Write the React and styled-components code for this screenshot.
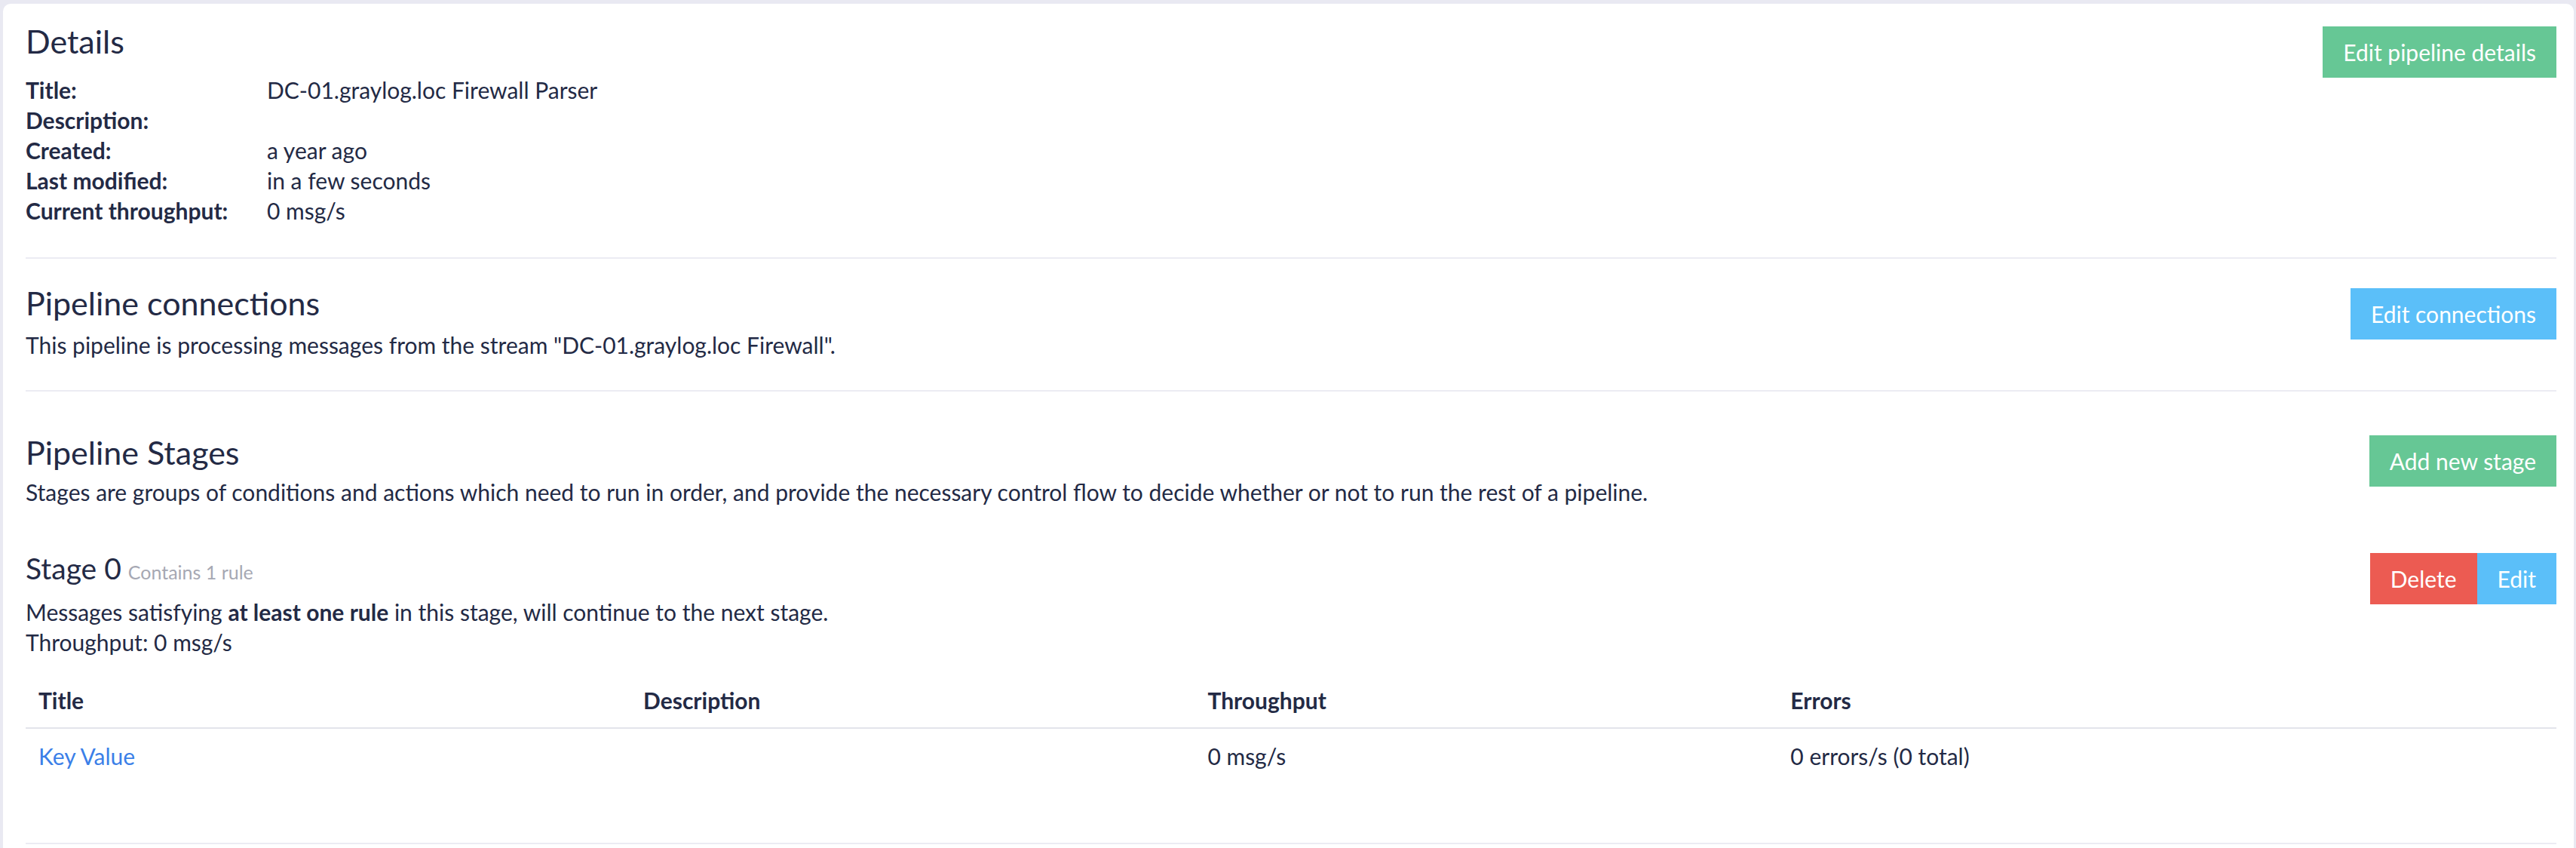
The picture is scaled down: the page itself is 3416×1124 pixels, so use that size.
import React from "react";
import styled, { createGlobalStyle } from "styled-components";

const Global = createGlobalStyle`
  html, body { margin: 0; padding: 0; }
  body {
    background: #e9e9f2;
    font-family: "Lato", "Open Sans", sans-serif;
    color: #232a45;
  }
`;

const Card = styled.div`
  margin: 5px 3px 0 4px;
  background: #ffffff;
  border-radius: 10px;
  padding: 0 23px 0 30px;
  min-height: 1200px;
`;

const Section = styled.section`
  display: flex;
  align-items: flex-start;
  justify-content: space-between;
  padding: ${(p) => p.$pad || "30px 0 40px"};
  border-bottom: 2px solid #ececf3;
`;

const Main = styled.div`
  flex: 1;
  min-width: 0;
`;

const Heading = styled.h2`
  margin: ${(p) => p.$margin || "0"};
  font-family: "Lato", "Open Sans", sans-serif;
  font-weight: 400;
  font-size: 43px;
  line-height: 44px;
  color: #232a45;
`;

const StageHeading = styled.h3`
  margin: 0;
  font-weight: 400;
  font-size: 39px;
  line-height: 40px;
  color: #232a45;
`;

const Muted = styled.small`
  font-size: 25px;
  color: #a6a8b3;
  margin-left: 9px;
`;

const Text = styled.p`
  margin: ${(p) => p.$margin || "0"};
  font-size: 30px;
  line-height: 40px;
`;

const DefList = styled.dl`
  display: grid;
  grid-template-columns: 320px 1fr;
  margin: 22px 0 0;
  font-size: 30px;
  line-height: 40px;
`;

const Term = styled.dt`
  font-weight: 700;
`;

const Def = styled.dd`
  margin: 0;
  min-height: 40px;
`;

const Button = styled.button`
  border: none;
  border-radius: 0;
  padding: 14px 27px;
  font-family: "Lato", "Open Sans", sans-serif;
  font-size: 30px;
  line-height: 40px;
  color: #ffffff;
  cursor: pointer;
  background: ${(p) =>
    p.$variant === "success"
      ? "#66c795"
      : p.$variant === "danger"
      ? "#ec5b52"
      : "#5bbff9"};
`;

const ButtonGroup = styled.div`
  display: flex;
  margin-top: ${(p) => p.$top || "0"};
`;

const Stage = styled.div`
  margin-top: 61px;
`;

const StageRow = styled.div`
  display: flex;
  align-items: flex-start;
  justify-content: space-between;
`;

const Table = styled.table`
  width: 100%;
  border-collapse: collapse;
  margin-top: 21px;
  font-size: 30px;
  line-height: 40px;
  table-layout: fixed;
`;

const Th = styled.th`
  box-sizing: border-box;
  text-align: left;
  font-weight: 700;
  padding: 16px 17px;
  border-bottom: 2px solid #e3e4eb;
  width: ${(p) => p.$w || "auto"};
`;

const Td = styled.td`
  padding: 16px 17px;
`;

const Link = styled.a`
  color: #3b7fe8;
  text-decoration: none;
`;

export default function App() {
  return (
    <>
      <Global />
      <Card>
        <Section $pad="30px 0 42px">
          <Main>
            <Heading $margin="-2px 0 0">Details</Heading>
            <DefList>
              <Term>Title:</Term>
              <Def>DC-01.graylog.loc Firewall Parser</Def>
              <Term>Description:</Term>
              <Def></Def>
              <Term>Created:</Term>
              <Def>a year ago</Def>
              <Term>Last modified:</Term>
              <Def>in a few seconds</Def>
              <Term>Current throughput:</Term>
              <Def>0 msg/s</Def>
            </DefList>
          </Main>
          <Button $variant="success">Edit pipeline details</Button>
        </Section>

        <Section $pad="37px 0 40px">
          <Main>
            <Heading $margin="0 0 13px">Pipeline connections</Heading>
            <Text>
              This pipeline is processing messages from the stream
              "DC-01.graylog.loc Firewall".
            </Text>
          </Main>
          <ButtonGroup $top="2px">
            <Button $variant="info">Edit connections</Button>
          </ButtonGroup>
        </Section>

        <Section $pad="59px 0 79px">
          <Main>
            <StageRow>
              <div>
                <Heading $margin="0 0 10px">Pipeline Stages</Heading>
                <Text>
                  Stages are groups of conditions and actions which need to
                  run in order, and provide the necessary control flow to
                  decide whether or not to run the rest of a pipeline.
                </Text>
              </div>
              <ButtonGroup $top="-1px">
                <Button $variant="success">Add new stage</Button>
              </ButtonGroup>
            </StageRow>

            <Stage>
              <StageRow>
                <div>
                  <StageHeading>
                    Stage 0<Muted>Contains 1 rule</Muted>
                  </StageHeading>
                  <Text $margin="13px 0 0">
                    Messages satisfying <b>at least one rule</b> in this
                    stage, will continue to the next stage.
                  </Text>
                  <Text>Throughput: 0 msg/s</Text>
                </div>
                <ButtonGroup>
                  <Button $variant="danger">Delete</Button>
                  <Button $variant="info">Edit</Button>
                </ButtonGroup>
              </StageRow>

              <Table>
                <thead>
                  <tr>
                    <Th $w="23.9%">Title</Th>
                    <Th $w="22.3%">Description</Th>
                    <Th $w="23.03%">Throughput</Th>
                    <Th>Errors</Th>
                  </tr>
                </thead>
                <tbody>
                  <tr>
                    <Td>
                      <Link href="#">Key Value</Link>
                    </Td>
                    <Td></Td>
                    <Td>0 msg/s</Td>
                    <Td>0 errors/s (0 total)</Td>
                  </tr>
                </tbody>
              </Table>
            </Stage>
          </Main>
        </Section>
      </Card>
    </>
  );
}
